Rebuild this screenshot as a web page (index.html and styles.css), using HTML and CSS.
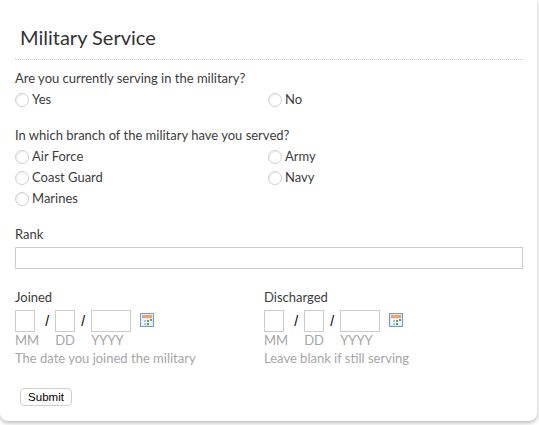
FILE: index.html
```html
<!DOCTYPE html>
<html lang="en">
<head>
  <meta charset="UTF-8" />
  <title>Military Service</title>
  <link rel="stylesheet" href="styles.css">
</head>
<body>
  <form class="card">

    <!-- TITLE -->
    <h1 class="title">Military Service</h1>

    <!-- CURRENTLY SERVING -->
    <div class="field serving">
      <div class="label">Are you currently serving in the military?</div>
      <div class="options">
        <label class="option"><span class="radio"></span>Yes</label>
        <label class="option"><span class="radio"></span>No</label>
      </div>
    </div>

    <!-- BRANCH -->
    <div class="field branch">
      <div class="label">In which branch of the military have you served?</div>
      <div class="options">
        <label class="option"><span class="radio"></span>Air Force</label>
        <label class="option"><span class="radio"></span>Army</label>
        <label class="option"><span class="radio"></span>Coast Guard</label>
        <label class="option"><span class="radio"></span>Navy</label>
        <label class="option"><span class="radio"></span>Marines</label>
      </div>
    </div>

    <!-- RANK -->
    <div class="field rank">
      <div class="label">Rank</div>
      <input type="text" class="text-input" />
    </div>

    <!-- DATES -->
    <div class="dates">
      <div class="date-col">
        <div class="label">Joined</div>
        <div class="date-row">
          <div class="date-part"><input type="text" class="box short" /><span class="hint">MM</span></div>
          <span class="slash">/</span>
          <div class="date-part"><input type="text" class="box short" /><span class="hint">DD</span></div>
          <span class="slash">/</span>
          <div class="date-part"><input type="text" class="box long" /><span class="hint">YYYY</span></div>
          <svg class="cal" viewBox="0 0 14 14" width="14" height="14">
            <rect x="0.5" y="0.5" width="13" height="13" fill="#dbe9f9" stroke="#6f9fd8" />
            <rect x="2" y="2" width="10" height="3" fill="#f3a25f" />
            <rect x="2" y="6" width="10" height="6" fill="#f4f8fd" />
            <rect x="4" y="7" width="2" height="2" fill="#a9c6e8" />
            <rect x="7" y="7" width="2" height="2" fill="#5fa84a" />
            <rect x="10" y="6" width="2" height="2" fill="#5fa84a" />
            <rect x="4" y="10" width="2" height="2" fill="#a9c6e8" />
            <rect x="7" y="10" width="2" height="2" fill="#5fa84a" />
          </svg>
        </div>
        <div class="hint">The date you joined the military</div>
      </div>
      <div class="date-col">
        <div class="label">Discharged</div>
        <div class="date-row">
          <div class="date-part"><input type="text" class="box short" /><span class="hint">MM</span></div>
          <span class="slash">/</span>
          <div class="date-part"><input type="text" class="box short" /><span class="hint">DD</span></div>
          <span class="slash">/</span>
          <div class="date-part"><input type="text" class="box long" /><span class="hint">YYYY</span></div>
          <svg class="cal" viewBox="0 0 14 14" width="14" height="14">
            <rect x="0.5" y="0.5" width="13" height="13" fill="#dbe9f9" stroke="#6f9fd8" />
            <rect x="2" y="2" width="10" height="3" fill="#f3a25f" />
            <rect x="2" y="6" width="10" height="6" fill="#f4f8fd" />
            <rect x="4" y="7" width="2" height="2" fill="#a9c6e8" />
            <rect x="7" y="7" width="2" height="2" fill="#5fa84a" />
            <rect x="10" y="6" width="2" height="2" fill="#5fa84a" />
            <rect x="4" y="10" width="2" height="2" fill="#a9c6e8" />
            <rect x="7" y="10" width="2" height="2" fill="#5fa84a" />
          </svg>
        </div>
        <div class="hint">Leave blank if still serving</div>
      </div>
    </div>

    <!-- SUBMIT -->
    <button type="button" class="submit">Submit</button>

  </form>
</body>
</html>
```

FILE: styles.css
```css
html, body {
  margin: 0;
  height: 425px;
  overflow: hidden;
  background-color: #fff;
}

body {
  font-family: Lato, "Open Sans", sans-serif;
  font-size: 13px;
  line-height: 21px;
  color: #3c3c3c;
}

.card {
  box-sizing: border-box;
  width: 537px;
  height: 421px;
  padding: 0 14px 0 15px;
  background-color: #fff;
  border-radius: 0 0 8px 8px;
  box-shadow: 0 2px 4px rgba(0, 0, 0, 0.28);
}

.title {
  margin: 0;
  padding: 21px 0 0 5px;
  height: 38px;
  font-size: 20px;
  line-height: 32px;
  font-weight: 400;
  color: #333;
  border-bottom: 1px dotted #c8c8c8;
}

.field {
  margin: 0;
}

.serving {
  padding-top: 8px;
}

.branch {
  padding-top: 15px;
}

.rank {
  padding-top: 15px;
}

.label {
  height: 21px;
}

.options {
  display: grid;
  grid-template-columns: 253px 1fr;
}

.option {
  display: flex;
  align-items: center;
  height: 21px;
}

.radio {
  box-sizing: border-box;
  width: 14px;
  height: 14px;
  margin-right: 3px;
  border: 1px solid #d0d0d0;
  border-radius: 50%;
  background-color: #fff;
  box-shadow: inset 1px 1px 1px rgba(0, 0, 0, 0.08);
}

.text-input {
  display: block;
  box-sizing: border-box;
  width: 508px;
  height: 22px;
  margin-top: 2px;
  border: 1px solid #ccc;
  padding: 0 4px;
}

.dates {
  display: flex;
  padding-top: 18px;
}

.date-col {
  width: 249px;
}

.date-row {
  display: flex;
  align-items: flex-start;
  margin-top: 2px;
}

.date-part {
  display: flex;
  flex-direction: column;
  white-space: nowrap;
}

.date-part .hint {
  margin-top: -1px;
}

.box {
  box-sizing: border-box;
  height: 22px;
  border: 1px solid #ccc;
  padding: 0;
}

.short {
  width: 20px;
}

.long {
  width: 40px;
}

.slash {
  width: 16px;
  margin-top: 1px;
  text-align: center;
  font-family: "Liberation Sans", Arial, sans-serif;
  font-size: 14px;
  color: #000;
}

.cal {
  margin: 3px 0 0 9px;
}

.hint {
  color: #a6a6a6;
  line-height: 18px;
}

.submit {
  display: block;
  width: 52px;
  height: 18px;
  margin: 21px 0 0 5px;
  padding: 0;
  font-family: "Liberation Sans", Arial, sans-serif;
  font-size: 11.5px;
  color: #000;
  background-color: #fff;
  border: 1px solid #d0d0d0;
  border-radius: 4px;
}
```
